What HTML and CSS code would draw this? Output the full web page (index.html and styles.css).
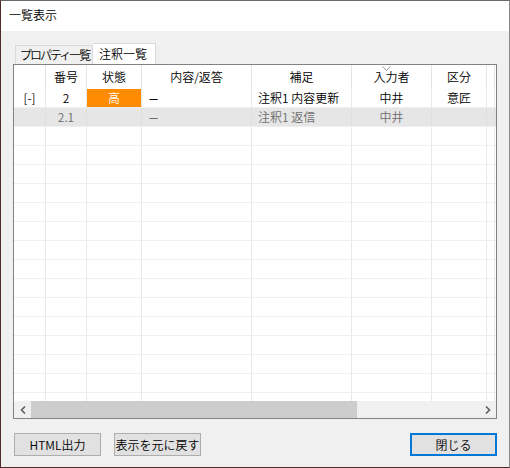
FILE: index.html
```html
<!DOCTYPE html>
<html lang="ja">
<head>
<meta charset="utf-8">
<title>一覧表示</title>
<link rel="stylesheet" href="styles.css">
</head>
<body>
<div class="window">
  <div class="titlebar">一覧表示</div>
  <div class="client">
    <div class="tabs">
      <div class="tab">プロパティ一覧</div>
      <div class="tab active">注釈一覧</div>
    </div>
    <div class="grid">
      <div class="rows">
        <div class="row head">
          <div class="c"></div>
          <div class="c">番号</div>
          <div class="c">状態</div>
          <div class="c">内容/返答</div>
          <div class="c">補足</div>
          <div class="c sorted">入力者<svg class="sort" width="9" height="5" viewBox="0 0 9 5"><polyline points="0.5,0.5 4.5,4.5 8.5,0.5" fill="none" stroke="#9a9a9a" stroke-width="1"/></svg></div>
          <div class="c">区分</div>
          <div class="c"></div>
        </div>
        <div class="row">
          <div class="c">[-]</div>
          <div class="c">2</div>
          <div class="c high">高</div>
          <div class="c left dash">—</div>
          <div class="c left">注釈1 内容更新</div>
          <div class="c">中井</div>
          <div class="c">意匠</div>
          <div class="c"></div>
        </div>
        <div class="row sub">
          <div class="c"></div>
          <div class="c">2.1</div>
          <div class="c"></div>
          <div class="c left dash">—</div>
          <div class="c left">注釈1 返信</div>
          <div class="c">中井</div>
          <div class="c"></div>
          <div class="c"></div>
        </div>
        <div class="row"><div class="c"></div><div class="c"></div><div class="c"></div><div class="c"></div><div class="c"></div><div class="c"></div><div class="c"></div><div class="c"></div></div>
        <div class="row"><div class="c"></div><div class="c"></div><div class="c"></div><div class="c"></div><div class="c"></div><div class="c"></div><div class="c"></div><div class="c"></div></div>
        <div class="row"><div class="c"></div><div class="c"></div><div class="c"></div><div class="c"></div><div class="c"></div><div class="c"></div><div class="c"></div><div class="c"></div></div>
        <div class="row"><div class="c"></div><div class="c"></div><div class="c"></div><div class="c"></div><div class="c"></div><div class="c"></div><div class="c"></div><div class="c"></div></div>
        <div class="row"><div class="c"></div><div class="c"></div><div class="c"></div><div class="c"></div><div class="c"></div><div class="c"></div><div class="c"></div><div class="c"></div></div>
        <div class="row"><div class="c"></div><div class="c"></div><div class="c"></div><div class="c"></div><div class="c"></div><div class="c"></div><div class="c"></div><div class="c"></div></div>
        <div class="row"><div class="c"></div><div class="c"></div><div class="c"></div><div class="c"></div><div class="c"></div><div class="c"></div><div class="c"></div><div class="c"></div></div>
        <div class="row"><div class="c"></div><div class="c"></div><div class="c"></div><div class="c"></div><div class="c"></div><div class="c"></div><div class="c"></div><div class="c"></div></div>
        <div class="row"><div class="c"></div><div class="c"></div><div class="c"></div><div class="c"></div><div class="c"></div><div class="c"></div><div class="c"></div><div class="c"></div></div>
        <div class="row"><div class="c"></div><div class="c"></div><div class="c"></div><div class="c"></div><div class="c"></div><div class="c"></div><div class="c"></div><div class="c"></div></div>
        <div class="row"><div class="c"></div><div class="c"></div><div class="c"></div><div class="c"></div><div class="c"></div><div class="c"></div><div class="c"></div><div class="c"></div></div>
        <div class="row"><div class="c"></div><div class="c"></div><div class="c"></div><div class="c"></div><div class="c"></div><div class="c"></div><div class="c"></div><div class="c"></div></div>
        <div class="row"><div class="c"></div><div class="c"></div><div class="c"></div><div class="c"></div><div class="c"></div><div class="c"></div><div class="c"></div><div class="c"></div></div>
        <div class="row"><div class="c"></div><div class="c"></div><div class="c"></div><div class="c"></div><div class="c"></div><div class="c"></div><div class="c"></div><div class="c"></div></div>
        <div class="row"><div class="c"></div><div class="c"></div><div class="c"></div><div class="c"></div><div class="c"></div><div class="c"></div><div class="c"></div><div class="c"></div></div>
      </div>
      <div class="hscroll">
        <div class="arrow"><svg width="6" height="8" viewBox="0 0 6 8"><polyline points="5,0.5 1.5,4 5,7.5" fill="none" stroke="#606060" stroke-width="1.6"/></svg></div>
        <div class="track"><div class="thumb"></div></div>
        <div class="arrow"><svg width="6" height="8" viewBox="0 0 6 8"><polyline points="1,0.5 4.5,4 1,7.5" fill="none" stroke="#606060" stroke-width="1.6"/></svg></div>
      </div>
    </div>
    <div class="buttons">
      <div class="btn">HTML出力</div>
      <div class="btn">表示を元に戻す</div>
      <div class="spacer"></div>
      <div class="btn default">閉じる</div>
    </div>
  </div>
</div>
</body>
</html>
```

FILE: styles.css
```css
* { box-sizing: border-box; }
html, body { margin: 0; padding: 0; }
body {
  font-family: "Noto Sans CJK JP", "Noto Sans", sans-serif;
  font-size: 12px;
  font-weight: 350;
  color: #000;
  width: 510px;
  height: 468px;
  overflow: hidden;
}
.window {
  width: 510px;
  height: 468px;
  border-top: 1px solid #6a6a6a;
  border-right: 1px solid #8a8a8a;
  border-left: 1px solid #4e2c2c;
  border-bottom: 1px solid #4e2c2c;
  display: flex;
  flex-direction: column;
  background: #f0f0f0;
}
.titlebar {
  height: 30px;
  background: #fff;
  padding-left: 8px;
  line-height: 28px;
  flex: none;
}
.client {
  flex: 1;
  display: flex;
  flex-direction: column;
  padding: 12px 12px 11px 12px;
}
.tabs {
  height: 21px;
  display: flex;
  align-items: flex-end;
  padding-left: 2px;
  flex: none;
}
.tab {
  height: 19px;
  padding: 0 0 0 4px;
  border: 1px solid #d9d9d9;
  border-bottom: none;
  line-height: 18px;
  background: #f0f0f0;
  width: 78px;
  white-space: nowrap;
  letter-spacing: -2px;
  overflow: hidden;
}
.tab.active {
  height: 21px;
  width: 63px;
  background: #fff;
  border-left: none;
  padding-left: 6px;
  line-height: 20px;
  letter-spacing: 0;
}
.grid {
  height: 355px;
  border: 1px solid #828282;
  background: #fff;
  display: flex;
  flex-direction: column;
  flex: none;
}
.rows {
  flex: 1;
  overflow: hidden;
}
.row {
  display: grid;
  grid-template-columns: 32px 41px 55px 110px 100px 80px 55px 8px;
  height: 19px;
  border-bottom: 1px solid #efefef;
}
.row.head {
  height: 24px;
  border-bottom: none;
}
.c {
  border-right: 1px solid #e8e8e8;
  text-align: center;
  line-height: 18px;
  white-space: nowrap;
  overflow: hidden;
  position: relative;
}
.row.head .c {
  line-height: 23px;
  border-right-color: #e4e4e4;
}
.c.left {
  text-align: left;
  padding-left: 6px;
}
.c.dash {
  padding-left: 7px;
  font-size: 10px;
  font-weight: 700;
}
.c.high {
  background: #ff8c00;
  color: #fff;
}
.row.sub {
  background: #e6e6e6;
  color: #6d6d6d;
}
.row.sub .c { border-right-color: #e0e0e0; }
.sort {
  position: absolute;
  left: 30px;
  top: 1px;
}
.hscroll {
  height: 17px;
  display: flex;
  background: #f0f0f0;
  flex: none;
}
.arrow {
  width: 17px;
  display: flex;
  align-items: center;
  justify-content: center;
  flex: none;
}
.track {
  flex: 1;
  display: flex;
}
.thumb {
  width: 326px;
  background: #cdcdcd;
}
.buttons {
  margin-top: 14px;
  display: flex;
  gap: 13px;
  padding-left: 1px;
}
.spacer { flex: 1; }
.btn {
  width: 87px;
  height: 23px;
  border: 1px solid #adadad;
  background: #e1e1e1;
  text-align: center;
  line-height: 21px;
}
.btn.default {
  border: 2px solid #0078d7;
  line-height: 19px;
}
```
